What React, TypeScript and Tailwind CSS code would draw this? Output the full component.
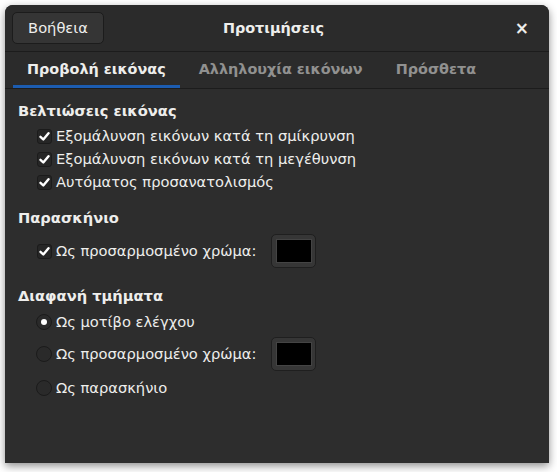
import React from "react";

const font = { fontFamily: '"DejaVu Sans", sans-serif' };

function Check() {
  return (
    <span className="flex h-[15px] w-[15px] shrink-0 items-center justify-center rounded-[3px] border border-[#1b1b1b] bg-[#262626]">
      <svg width="11" height="11" viewBox="0 0 11 11">
        <path d="M1.5 5.8 L4.3 8.5 L9.5 2.2" stroke="#ffffff" strokeWidth="2.4" fill="none" strokeLinecap="round" strokeLinejoin="round" />
      </svg>
    </span>
  );
}

function Radio({ on }: { on?: boolean }) {
  return (
    <span className="flex h-[16px] w-[16px] shrink-0 items-center justify-center rounded-full border border-[#1b1b1b] bg-[#2a2a2a]">
      {on && <span className="h-[6px] w-[6px] rounded-full bg-white" />}
    </span>
  );
}

function Swatch() {
  return (
    <div className="flex h-[34px] w-[45px] items-center justify-center rounded-[5px] border border-[#1f1f1f] bg-[#363636]">
      <div className="h-[24px] w-[36px] border border-[#444] bg-black" />
    </div>
  );
}

export default function App() {
  return (
    <div className="h-[472px] w-[557px] bg-white text-[14.67px]" style={font}>
      <div className="ml-[5px] pt-[5px]">
        <div className="flex h-[458px] w-[544px] flex-col overflow-hidden rounded-t-[8px] bg-[#2d2d2d] shadow-[0_3px_9px_rgba(0,0,0,0.45)]">
          <div className="grid h-[47px] grid-cols-[1fr_auto_1fr] items-center border-b border-[#1c1c1c] bg-[#2b2b2b] pl-[7px] pr-[20px]">
            <div>
              <button className="h-[32px] w-[92px] rounded-[5px] border border-[#1c1c1c] bg-[#353535] text-[14.67px] leading-none text-[#eeeeec]">
                Βοήθεια
              </button>
            </div>
            <div className="pl-[6px] text-center text-[14.4px] font-bold leading-none text-[#eeeeec]">Προτιμήσεις</div>
            <div className="flex justify-end">
              <span className="text-[17px] font-bold leading-none text-[#eeeeec]">×</span>
            </div>
          </div>
          <div className="flex h-[37px] gap-[5px] border-b border-[#1c1c1c] bg-[#2b2b2b] pl-[8px] text-[14.4px] font-bold leading-none">
            <div className="flex h-full flex-col justify-between pt-[10px]">
              <span className="px-[14px] text-[#eeeeec]">Προβολή εικόνας</span>
              <span className="h-[3px] bg-[#1c5cb0]" />
            </div>
            <div className="flex h-full flex-col pt-[10px]">
              <span className="px-[14px] text-[#919190]">Αλληλουχία εικόνων</span>
            </div>
            <div className="flex h-full flex-col pt-[10px]">
              <span className="px-[14px] text-[#919190]">Πρόσθετα</span>
            </div>
          </div>
          <div className="flex flex-col px-[13px] pt-[12px] text-[#eeeeec]">
            <div className="font-bold leading-[20px]">Βελτιώσεις εικόνας</div>
            <div className="mt-[6px] flex flex-col gap-[5px] pl-[19px]">
              <label className="flex h-[18px] items-center gap-[4px]"><Check />Εξομάλυνση εικόνων κατά τη σμίκρυνση</label>
              <label className="flex h-[18px] items-center gap-[4px]"><Check />Εξομάλυνση εικόνων κατά τη μεγέθυνση</label>
              <label className="flex h-[18px] items-center gap-[4px]"><Check />Αυτόματος προσανατολισμός</label>
            </div>
            <div className="mt-[17px] font-bold leading-[20px]">Παρασκήνιο</div>
            <div className="mt-[6px] flex items-center gap-[4px] pl-[19px]">
              <Check />
              <span>Ως προσαρμοσμένο χρώμα:</span>
              <div className="ml-[11px]"><Swatch /></div>
            </div>
            <div className="mt-[18px] font-bold leading-[20px]">Διαφανή τμήματα</div>
            <div className="mt-[5px] flex flex-col pl-[18px]">
              <label className="flex h-[22px] items-center gap-[4px]"><Radio on />Ως μοτίβο ελέγχου</label>
              <div className="mt-[4px] flex items-center gap-[4px]">
                <Radio />
                <span>Ως προσαρμοσμένο χρώμα:</span>
                <div className="ml-[11px]"><Swatch /></div>
              </div>
              <label className="mt-[6px] flex h-[22px] items-center gap-[4px]"><Radio />Ως παρασκήνιο</label>
            </div>
          </div>
        </div>
      </div>
    </div>
  );
}
